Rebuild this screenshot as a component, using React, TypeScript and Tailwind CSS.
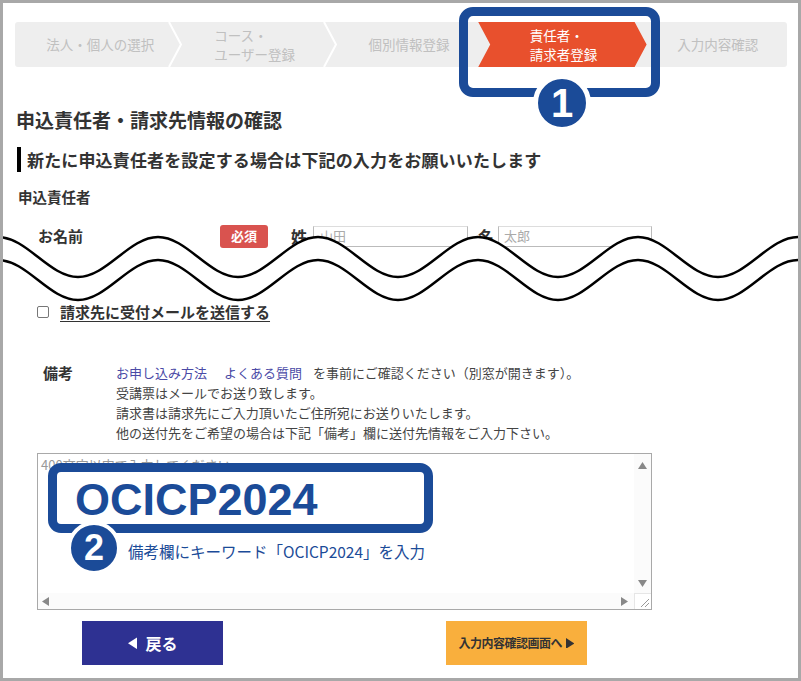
import React from "react";

const blue = "#1b4b98";

const steps = [
  { lines: ["法人・個人の選択"] },
  { lines: ["コース・", "ユーザー登録"] },
  { lines: ["個別情報登録"] },
  { lines: ["責任者・", "請求者登録"], active: true },
  { lines: ["入力内容確認"] },
];

// one wavy line, peaks every 160px
function wavePath(yTop: number, yBot: number) {
  const h = 80;
  let x = -162;
  let d = `M${x} ${yTop}`;
  let down = true;
  while (x < 820) {
    const y1 = down ? yTop : yBot;
    const y2 = down ? yBot : yTop;
    d += ` C${x + h * 0.36} ${y1} ${x + h * 0.64} ${y2} ${x + h} ${y2}`;
    x += h;
    down = !down;
  }
  return { d, end: x };
}

function Tri({ dir, size = 1, className }: { dir: "up" | "down" | "left" | "right"; size?: number; className?: string }) {
  const pts = {
    up: "0,7 4.5,0 9,7",
    down: "0,0 9,0 4.5,7",
    left: "7,0 7,9 0,4.5",
    right: "0,0 7,4.5 0,9",
  }[dir];
  const vertical = dir === "up" || dir === "down";
  const w = vertical ? 9 : 7;
  const h = vertical ? 7 : 9;
  return (
    <svg width={w * size} height={h * size} viewBox={`0 0 ${w} ${h}`} className={className}>
      <polygon points={pts} fill="currentColor" />
    </svg>
  );
}

function StepBar() {
  return (
    <div className="relative flex h-[45px] rounded-[3px] bg-[#eeeeee]">
      {steps.map((step, i) => (
        <div key={i} className="relative flex flex-1 items-center justify-center pl-[16px]">
          {step.active && (
            <div className="absolute inset-y-0 left-0 -right-[14px] bg-[#e8502d] [clip-path:polygon(0_0,calc(100%-12px)_0,100%_50%,calc(100%-12px)_100%,0_100%,12px_50%)]" />
          )}
          <div className={`relative text-[13.5px] leading-[19px] ${step.active ? "text-white" : "text-[#c0c0c0]"}`}>
            {step.lines.map((line) => (
              <div key={line}>{line}</div>
            ))}
          </div>
          {i < 2 && (
            <svg width="16" height="45" className="absolute left-full top-0 -ml-[1px]">
              <polyline points="1,0 13,22.5 1,45" fill="none" stroke="white" strokeWidth="2" />
            </svg>
          )}
        </div>
      ))}

      <div className="absolute left-[444px] -top-[15px] h-[90px] w-[201px] rounded-[14px] border-[9px]" style={{ borderColor: blue }} />
      <div
        className="absolute left-[518px] top-[52px] flex h-[58px] w-[58px] items-center justify-center rounded-full border-[5px] border-white font-['Liberation_Sans',sans-serif] text-[40px] font-bold leading-none text-white"
        style={{ backgroundColor: blue }}
      >
        1
      </div>
    </div>
  );
}

export default function App() {
  const line1 = wavePath(8, 48);
  const line2 = wavePath(31, 71);

  return (
    <div className="relative h-[681px] w-[801px] overflow-hidden border-[3px] border-[#a8a8a8] bg-white font-['Noto_Sans_CJK_JP',sans-serif] text-[#333]">
      <div className="pl-[12px] pr-[11px] pt-[19px]">
        <StepBar />
      </div>

      <div className="pl-[14px]">
        <h1 className="-ml-[1px] mt-[40px] text-[19px] font-bold leading-[26px]">申込責任者・請求先情報の確認</h1>
        <h2 className="mt-[14px] border-l-[4px] border-black pl-[6px] text-[17px] font-bold leading-[25px] tracking-[0.15px]">
          新たに申込責任者を設定する場合は下記の入力をお願いいたします
        </h2>
        <p className="ml-[1px] mt-[15px] text-[14.5px] font-bold leading-[20px]">申込責任者</p>

        <div className="mt-[18px] flex h-[22px] items-center">
          <span className="ml-[21px] w-[182px] text-[15px] font-bold">お名前</span>
          <span className="flex h-[23px] w-[48px] items-center justify-center rounded-[3px] bg-[#d9534f] text-[13px] font-bold text-white">
            必須
          </span>
          <span className="ml-[23px] text-[16px] font-bold">姓</span>
          <div className="ml-[6px] flex h-[21px] w-[155px] items-center border border-[#bbbbbb] border-t-[#dddddd] pl-[6px] text-[13px] text-[#aaaaaa]">
            山田
          </div>
          <span className="ml-[10px] text-[16px] font-bold">名</span>
          <div className="ml-[4px] flex h-[21px] w-[154px] items-center border border-[#bbbbbb] border-t-[#dddddd] pl-[5px] text-[13px] text-[#aaaaaa]">
            太郎
          </div>
        </div>

        <div className="mt-[55px] flex h-[20px] items-center">
          <span className="ml-[20px] h-[12px] w-[12px] rounded-[2px] border border-[#777777] bg-white" />
          <span className="ml-[11px] text-[15px] font-bold underline underline-offset-[3px]">請求先に受付メールを送信する</span>
        </div>

        <div className="mt-[41px] flex">
          <span className="ml-[26px] w-[73px] text-[15px] font-bold leading-[20px]">備考</span>
          <div className="text-[13px] leading-[20px] text-[#444444]">
            <p>
              <span className="text-[#4a4aa6]">お申し込み方法</span>
              <span className="ml-[17px] text-[#4a4aa6]">よくある質問</span>
              <span className="ml-[11px]">を事前にご確認ください（別窓が開きます）。</span>
            </p>
            <p>受講票はメールでお送り致します。</p>
            <p>請求書は請求先にご入力頂いたご住所宛にお送りいたします。</p>
            <p>他の送付先をご希望の場合は下記「備考」欄に送付先情報をご入力下さい。</p>
          </div>
        </div>

        <div className="relative ml-[20px] mt-[10px] grid h-[157px] w-[615px] grid-cols-[1fr_17px] grid-rows-[1fr_16px] border border-[#a9a9a9]">
          <div className="pl-[3px] pt-[1px] text-[13px] text-[#999999]">400文字以内で入力してください</div>
          <div className="flex flex-col items-center justify-between bg-[#fbfbfb] pb-[6px] pt-[8px] text-[#888888]">
            <Tri dir="up" />
            <Tri dir="down" />
          </div>
          <div className="flex items-center justify-between bg-[#fbfbfb] pl-[4px] pr-[6px] text-[#888888]">
            <Tri dir="left" />
            <Tri dir="right" />
          </div>
          <div className="flex items-end justify-end border-l border-t border-[#e6e6e6] p-[2px]">
            <svg width="9" height="9">
              <line x1="1" y1="9" x2="9" y2="1" stroke="#999" strokeWidth="1" />
              <line x1="5" y1="9" x2="9" y2="5" stroke="#999" strokeWidth="1" />
            </svg>
          </div>

          <div className="absolute left-[10px] top-[9px] h-[70px] w-[385px] rounded-[13px] border-[9px] bg-white pl-[18px] pt-[5px]" style={{ borderColor: blue }}>
            <div className="font-['Liberation_Sans',sans-serif] text-[45px] font-bold leading-[45px]" style={{ color: blue }}>
              OCICP2024
            </div>
          </div>
          <div
            className="absolute left-[29px] top-[67px] flex h-[54px] w-[54px] items-center justify-center rounded-full border-[4px] border-white font-['Liberation_Sans',sans-serif] text-[36px] font-bold leading-none text-white"
            style={{ backgroundColor: blue }}
          >
            2
          </div>
          <div className="absolute left-[90px] top-[86px] text-[15.5px] leading-[22px]" style={{ color: blue }}>
            備考欄にキーワード「OCICP2024」を入力
          </div>
        </div>

        <div className="mt-[11px] flex">
          <button className="ml-[65px] flex h-[44px] w-[141px] items-center justify-center gap-[8px] bg-[#2e3192] text-[16px] font-bold text-white">
            <Tri dir="left" size={1.4} />
            戻る
          </button>
          <button className="ml-[223px] flex h-[44px] w-[141px] items-center justify-center gap-[4px] bg-[#f9af3d] text-[12px] font-bold tracking-[-0.5px] text-[#333333]">
            入力内容確認画面へ
            <Tri dir="right" size={1.2} />
          </button>
        </div>
      </div>

      <svg viewBox="0 0 801 76" className="absolute -left-[3px] top-[226px] h-[76px] w-[801px]">
        <path d={`${line1.d} L${line1.end} 76 L-162 76 Z`} fill="white" />
        <path d={line1.d} fill="none" stroke="black" strokeWidth="2.5" />
        <path d={line2.d} fill="none" stroke="black" strokeWidth="2.5" />
      </svg>
    </div>
  );
}
